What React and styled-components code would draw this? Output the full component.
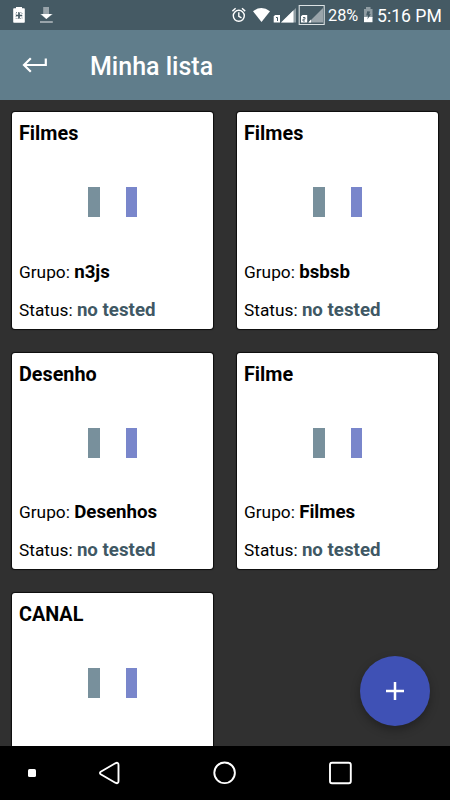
import React from 'react';
import styled, { createGlobalStyle } from 'styled-components';

const GlobalStyle = createGlobalStyle`
  * {
    box-sizing: border-box;
  }

  body {
    margin: 0;
    background: #303030;
    font-family: Roboto, 'Liberation Sans', sans-serif;
  }

  svg {
    display: block;
    flex-shrink: 0;
  }
`;

const Screen = styled.div`
  position: relative;
  display: flex;
  flex-direction: column;
  width: 450px;
  height: 800px;
  overflow: hidden;
  background: #303030;
`;

const StatusBar = styled.div`
  display: flex;
  justify-content: space-between;
  flex: 0 0 30px;
  height: 30px;
  min-height: 0;
  background: #455a64;
  color: #fff;
`;

const Clock = styled.div`
  display: flex;
  height: 30px;
  padding-right: 8px;
  font-size: 17.6px;
  line-height: 32px;
  white-space: nowrap;
`;

const Battery = styled.span`
  width: 30px;
  font-size: 16.3px;
`;

const Time = styled.span`
  width: 65px;
  margin-left: -1px;
`;

const Toolbar = styled.header`
  display: flex;
  align-items: center;
  flex: 0 0 70px;
  padding: 2px 0 0 18px;
  background: #607d8b;
  color: #fff;
`;

const BackButton = styled.button`
  display: flex;
  width: 72px;
  padding: 0 0 3px;
  border: 0;
  background: none;
`;

const Title = styled.h1`
  margin: 0;
  padding-top: 2px;
  font-size: 25px;
  font-weight: 500;
  line-height: 30px;
`;

const CardGrid = styled.main`
  display: grid;
  grid-template-columns: 200.5px 200.5px;
  grid-auto-rows: 216.5px;
  gap: 24px 24.5px;
  flex: 1;
  min-height: 0;
  padding: 12.2px 12px 0 12.3px;
  overflow: hidden;
`;

const Card = styled.article`
  display: flex;
  flex-direction: column;
  padding: 10px 6.7px 0;
  border-radius: 3px;
  background: #fff;
  color: #000;
  box-shadow: 0 0 1px 1px rgba(0, 0, 0, 0.75);
`;

const CardTitle = styled.h2`
  margin: 0;
  font-size: 19.8px;
  font-weight: 700;
  line-height: 24px;
`;

const Loader = styled.div`
  display: flex;
  justify-content: center;
  gap: 26px;
  padding: 41px 0 42.5px;
`;

const Bar = styled.span`
  width: 11.5px;
  height: 30px;
  background: ${({ $color }) => $color};
`;

const Line = styled.p`
  margin: 0 0 14px;
  font-size: 17.3px;
  line-height: 24px;
  white-space: nowrap;
`;

const Value = styled.b`
  font-size: 18.7px;
  font-weight: 700;
  color: ${({ $muted }) => ($muted ? '#3f5864' : '#000')};
`;

const AddButton = styled.button`
  position: absolute;
  right: 20px;
  bottom: 74.5px;
  display: flex;
  align-items: center;
  justify-content: center;
  width: 70px;
  height: 70px;
  padding: 0;
  border: 0;
  border-radius: 50%;
  background: #3f51b5;
  box-shadow: 0 4px 10px rgba(0, 0, 0, 0.3);
`;

const NavBar = styled.nav`
  flex: 0 0 54px;
  background: #000;
`;

const channels = [
  { title: 'Filmes', group: 'n3js' },
  { title: 'Filmes', group: 'bsbsb' },
  { title: 'Desenho', group: 'Desenhos' },
  { title: 'Filme', group: 'Filmes' },
  { title: 'CANAL', group: '' },
];

function NotificationIcons() {
  return (
    <svg width="60" height="30" fill="#fff">
      <path d="M14 8.2h2V7h6v1.2h2a.8.8 0 0 1 .8.8v13a.8.8 0 0 1-.8.8H14a.8.8 0 0 1-.8-.8V9a.8.8 0 0 1 .8-.8Z" />
      <path d="M19 12.5v6M16 15.5h6" stroke="#455a64" strokeWidth="1.7" />
      <path d="M16 12.5h6v6h-6z" fill="none" stroke="#455a64" strokeWidth=".7" strokeDasharray="1 1.2" />
      <path d="M43.2 7h5.8v7h4l-6.8 5-6.2-5h3.2Z" opacity=".45" />
      <path d="M41 14h11l-5.6 5Z" />
      <path d="M40 21h12.8v2H40z" opacity=".45" />
    </svg>
  );
}

function SystemIcons() {
  return (
    <svg width="96" height="30" fill="#fff">
      <g fill="none" stroke="#fff" strokeWidth="1.4">
        <circle cx="6.8" cy="15.8" r="5.5" />
        <path d="M6.8 12.3v4l2.7 1.6M.4 11.1l3.2-2.8M10 8.3l3.2 2.8" />
      </g>
      <path d="M21 11.2Q29.4 5 38 11.2L29.5 22Z" />
      <path d="M41.7 16.3 43.2 15H48v7.5h-6.3Z" />
      <path d="M44 17.5h1.5V21" fill="none" stroke="#455a64" />
      <path d="M49 22.5 64 8v14.5Z" opacity=".4" />
      <path d="M49 22.5 61.5 10.3v12.2Z" />
      <path d="M67.2 5.5h25v19h-25z" fill="none" stroke="#dce2e4" strokeWidth="1.1" />
      <path d="M69 16.3 70.5 15h4.7v7.5H69Z" />
      <path d="M71 17.5h2v1.7h-2V21h2" fill="none" stroke="#455a64" strokeWidth=".9" />
      <path d="M76.5 22.5 91 8v14.5Z" opacity=".45" />
      <path d="m76.3 22.5 2.7-3v3Z" />
    </svg>
  );
}

function BatteryIcon() {
  return (
    <svg width="20" height="30" fill="#fff">
      <path d="M6 9h2V7h4.5v2h2v9H6Z" opacity=".4" />
      <path d="M6 17h8.5v5.2H6Z" />
      <path d="m9.2 11.2 3 .3-1 2.7h1.6l-3.4 5.2.7-3.8H8.2Z" fill="#455a64" />
    </svg>
  );
}

function ChannelCard({ title, group }) {
  return (
    <Card>
      <CardTitle>{title}</CardTitle>
      <Loader>
        <Bar $color="#78909c" />
        <Bar $color="#7986cb" />
      </Loader>
      {group && (
        <>
          <Line>
            Grupo: <Value>{group}</Value>
          </Line>
          <Line>
            Status: <Value $muted>no tested</Value>
          </Line>
        </>
      )}
    </Card>
  );
}

function App() {
  return (
    <Screen>
      <GlobalStyle />
      <StatusBar>
        <NotificationIcons />
        <Clock>
          <SystemIcons />
          <Battery>28%</Battery>
          <BatteryIcon />
          <Time>5:16 PM</Time>
        </Clock>
      </StatusBar>

      <Toolbar>
        <BackButton aria-label="Voltar">
          <svg width="34" height="24" fill="none" stroke="#fff" strokeWidth="2.2">
            <path d="M27.8 5.5v6.5H6M12.8 5.2 6 12l6.8 6.8" />
          </svg>
        </BackButton>
        <Title>Minha lista</Title>
      </Toolbar>

      <CardGrid>
        {channels.map((channel, index) => (
          <ChannelCard key={index} {...channel} />
        ))}
      </CardGrid>

      <NavBar>
        <svg width="450" height="54" fill="none" stroke="#fff" strokeWidth="1.9">
          <rect x="28" y="23" width="8" height="8" rx="1.5" fill="#fff" stroke="none" />
          <path d="M100.7 25.8 115.3 17.3Q118.5 15.8 118.5 19V35Q118.5 38.2 115.3 36.7L100.7 28.2Q99.2 27 100.7 25.8Z" />
          <circle cx="224.6" cy="26.8" r="10.3" />
          <rect x="330" y="16.7" width="20.8" height="20.6" rx="2" />
        </svg>
      </NavBar>

      <AddButton aria-label="Adicionar">
        <svg width="24" height="24" stroke="#fff" strokeWidth="2.5">
          <path d="M12 3v18M3 12h18" />
        </svg>
      </AddButton>
    </Screen>
  );
}

export default App;
